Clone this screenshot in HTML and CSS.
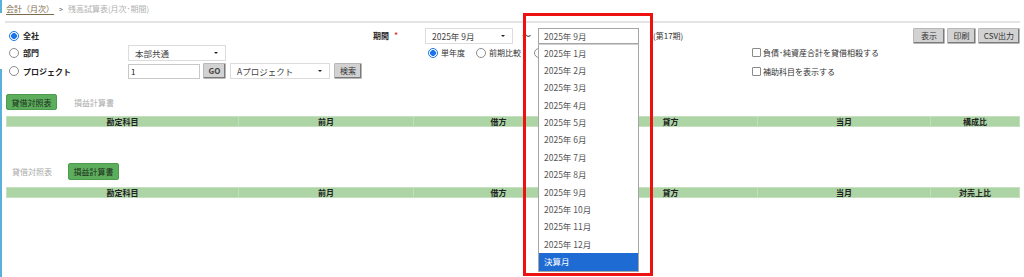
FILE: index.html
```html
<!DOCTYPE html>
<html lang="ja">
<head>
<meta charset="utf-8">
<title>残高試算表</title>
<link rel="stylesheet" href="styles.css">
</head>
<body>
<div class="page">
  <div class="crumb">
    <a class="crumb-link">会計（月次）</a>
    <span class="crumb-sep">&gt;</span>
    <span class="crumb-cur">残高試算表(月次･期間)</span>
  </div>

  <div class="form">
    <label class="opt"><span class="radio on"></span><b>全社</b></label>
    <div></div>
    <div class="period-label"><b>期間</b><span class="req">*</span></div>
    <div class="period">
      <div class="sel w88">2025年 9月<i class="caret"></i></div>
      <span class="tilde">～</span>
      <div class="sel open w101">2025年 9月
        <ul class="list">
          <li>2025年 1月</li>
          <li>2025年 2月</li>
          <li>2025年 3月</li>
          <li>2025年 4月</li>
          <li>2025年 5月</li>
          <li>2025年 6月</li>
          <li>2025年 7月</li>
          <li>2025年 8月</li>
          <li>2025年 9月</li>
          <li>2025年 10月</li>
          <li>2025年 11月</li>
          <li>2025年 12月</li>
          <li class="hl">決算月</li>
        </ul>
      </div>
      <span class="term">(第17期)</span>
    </div>
    <div class="actions">
      <button class="btn">表示</button>
      <button class="btn">印刷</button>
      <button class="btn">CSV出力</button>
    </div>

    <label class="opt"><span class="radio"></span><b>部門</b></label>
    <div class="ctrls"><div class="sel w98">本部共通<i class="caret"></i></div></div>
    <div></div>
    <div class="modes">
      <label class="mode"><span class="radio on"></span>単年度</label>
      <label class="mode"><span class="radio"></span>前期比較</label>
      <label class="mode"><span class="radio"></span></label>
    </div>
    <label class="chk"><span class="box"></span>負債･純資産合計を貸借相殺する</label>

    <label class="opt"><span class="radio"></span><b>プロジェクト</b></label>
    <div class="ctrls">
      <div class="txt">1</div>
      <button class="btn go">GO</button>
      <div class="sel w100">Aプロジェクト<i class="caret"></i></div>
      <button class="btn search">検索</button>
    </div>
    <div></div>
    <div></div>
    <label class="chk"><span class="box"></span>補助科目を表示する</label>
  </div>

  <section class="report first">
    <div class="tabs">
      <span class="tab active">貸借対照表</span>
      <span class="tab">損益計算書</span>
    </div>
    <div class="thead">
      <div>勘定科目</div><div>前月</div><div>借方</div><div>貸方</div><div>当月</div><div>構成比</div>
    </div>
  </section>

  <section class="report second">
    <div class="tabs">
      <span class="tab">貸借対照表</span>
      <span class="tab active">損益計算書</span>
    </div>
    <div class="thead">
      <div>勘定科目</div><div>前月</div><div>借方</div><div>貸方</div><div>当月</div><div>対売上比</div>
    </div>
  </section>

  <div class="highlight-box"></div>
</div>
</body>
</html>
```

FILE: styles.css
```css
* { box-sizing: border-box; }

html, body {
  margin: 0;
  padding: 0;
  background: #fff;
}

body {
  width: 1024px;
  height: 277px;
  overflow: hidden;
  font-family: "Noto Sans CJK JP", "Noto Sans", sans-serif;
  font-size: 8px;
  color: #333;
  background:
    linear-gradient(to bottom, #5ab0d8 0, #5ab0d8 13px, transparent 13px, transparent 69px, #5ab0d8 69px) no-repeat 0 0 / 2px 100%,
    #fff;
}

.page {
  position: relative;
  padding: 0 4px 0 6px;
  height: 277px;
}

/* breadcrumb */
.crumb {
  height: 23px;
  border-bottom: 2px solid #e4e4e4;
  display: flex;
  align-items: center;
  gap: 5px;
  padding: 0 0 3px 1px;
  margin-left: -1px;
  line-height: 1;
  white-space: nowrap;
}
.crumb-link {
  color: #7d6b4c;
  text-decoration: underline;
  text-underline-offset: 2px;
}
.crumb-sep { color: #555; font-size: 7px; }
.crumb-cur { color: #b0b0b0; }

/* form grid */
.form {
  margin-top: 4px;
  display: grid;
  grid-template-columns: 122px 245px 52px 327px 1fr;
  grid-template-rows: 17px 17px 20px;
  align-items: center;
  white-space: nowrap;
}

.opt {
  display: flex;
  align-items: center;
  gap: 4px;
  padding-left: 3px;
}
.opt b { font-weight: 700; color: #222; }

.radio {
  display: inline-block;
  width: 10px;
  height: 10px;
  border-radius: 50%;
  border: 1px solid #8c8c8c;
  background: #fff;
  flex: none;
}
.radio.on {
  border-color: #1a73e8;
  background: radial-gradient(circle, #1a73e8 0 2.6px, #fff 3.2px);
}

.period-label { display: flex; align-items: center; gap: 5px; }
.period-label b { color: #222; }
.req { color: #e02020; font-size: 9px; }

.period {
  display: flex;
  align-items: center;
}

.sel {
  position: relative;
  height: 16px;
  border: 1px solid #dcdcdc;
  background: #fff;
  display: flex;
  align-items: center;
  padding-left: 6px;
  color: #444;
  font-size: 8.5px;
  flex: none;
}
.caret {
  position: absolute;
  right: 7px;
  top: 6px;
  width: 0;
  height: 0;
  border-left: 2px solid transparent;
  border-right: 2px solid transparent;
  border-top: 2px solid #222;
}
.w88 { width: 88px; }
.w98 { width: 98px; }
.w100 { width: 100px; }
.w101 { width: 101px; }

.tilde { width: 25px; text-align: center; font-size: 9px; color: #333; padding-left: 2px; }

.sel.open {
  border-color: #a5a5a5;
  color: #555;
  padding-left: 5px;
}

.list {
  position: absolute;
  left: -1px;
  top: 15px;
  width: 101px;
  margin: 0;
  padding: 0;
  list-style: none;
  border: 1px solid #a5a5a5;
  border-top-color: #d0d0d0;
  background: #fff;
  z-index: 5;
}
.list li {
  height: 17.4px;
  line-height: 17.4px;
  padding-left: 5px;
  color: #555;
  font-size: 8.5px;
}
.list li.hl {
  background: #1e6bd3;
  color: #fff;
}

.term { margin-left: 14px; color: #333; }

.actions {
  display: flex;
  justify-content: flex-end;
  gap: 2px;
}

.btn {
  font-family: inherit;
  font-size: 8px;
  color: #333;
  height: 16px;
  padding: 0;
  background: #d2d2d2;
  border: 1px solid #b8b8b8;
  box-shadow: inset -1px -1px 0 #7a7a7a;
  border-radius: 1px;
  line-height: 1;
  white-space: nowrap;
  cursor: pointer;
}
.actions .btn:nth-child(1) { width: 32px; }
.actions .btn:nth-child(2) { width: 29px; }
.actions .btn:nth-child(3) { width: 42px; }

.ctrls {
  display: flex;
  align-items: center;
}

.txt {
  width: 72px;
  height: 15px;
  border: 1px solid #c8c8c8;
  padding-left: 2px;
  display: flex;
  align-items: center;
  color: #222;
}
.btn.go { width: 23px; height: 16px; margin-left: 3px; font-weight: 700; color: #444; }
.ctrls .w100 { margin-left: 4px; }
.btn.search { width: 28px; margin-left: 4px; }

.modes {
  display: flex;
  align-items: center;
  padding-left: 3px;
}
.mode {
  display: flex;
  align-items: center;
  gap: 3px;
  margin-right: 11px;
  color: #333;
}
.mode:nth-child(2) { margin-right: 13px; }

.chk {
  display: flex;
  align-items: center;
  gap: 2px;
  color: #333;
}
.box {
  width: 9px;
  height: 9px;
  border: 1px solid #8a8a8a;
  border-radius: 1px;
  background: #fff;
}

/* reports */
.report { display: flex; flex-direction: column; }
.report.first { margin-top: 13px; }
.report.second { margin-top: 36px; }

.tabs {
  display: flex;
  align-items: center;
  height: 16px;
  gap: 17px;
  white-space: nowrap;
}
.second .tabs { height: 17px; gap: 16px; padding-left: 6px; }

.tab {
  color: #aaa;
}
.tab.active {
  background: #5cad5c;
  border: 1px solid #4c9a4c;
  border-radius: 2px;
  color: #1d2d1d;
  height: 100%;
  display: flex;
  align-items: center;
  justify-content: center;
  padding: 0;
  width: 51px;
}

.thead {
  margin-top: 6px;
  height: 11px;
  display: grid;
  grid-template-columns: 232px 175px 170px 174px 173px 1fr;
  background: #acd4a4;
  border: 1px solid #c4e0bf;
}
.second .thead { margin-top: 7px; }
.thead div {
  text-align: center;
  font-weight: 700;
  color: #222;
  line-height: 9px;
  font-size: 8px;
  border-right: 1px solid #c2dfbd;
}
.thead div:last-child { border-right: none; }

/* annotation rectangle */
.highlight-box {
  position: absolute;
  left: 523px;
  top: 13px;
  width: 130px;
  height: 263px;
  border: 3px solid #ee1111;
  z-index: 10;
  pointer-events: none;
}
```
